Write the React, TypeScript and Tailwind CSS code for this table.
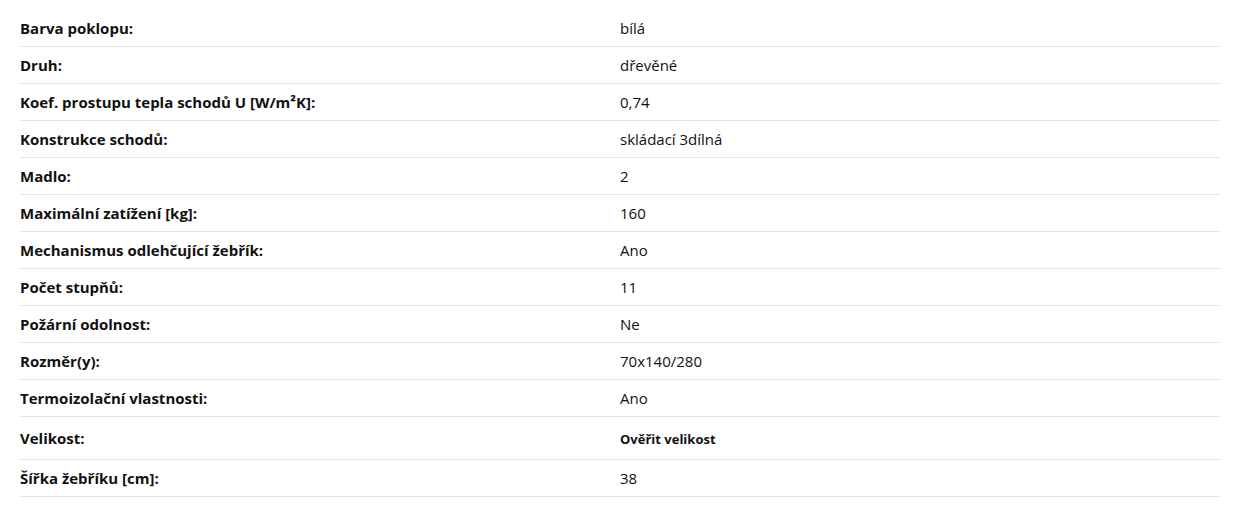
const rows: [string, string][] = [
  ['Barva poklopu:', 'bílá'],
  ['Druh:', 'dřevěné'],
  ['Koef. prostupu tepla schodů U [W/m²K]:', '0,74'],
  ['Konstrukce schodů:', 'skládací 3dílná'],
  ['Madlo:', '2'],
  ['Maximální zatížení [kg]:', '160'],
  ['Mechanismus odlehčující žebřík:', 'Ano'],
  ['Počet stupňů:', '11'],
  ['Požární odolnost:', 'Ne'],
  ['Rozměr(y):', '70x140/280'],
  ['Termoizolační vlastnosti:', 'Ano'],
  ['Velikost:', ''],
  ['Šířka žebříku [cm]:', '38'],
]

export default function App() {
  return (
    <div className="bg-white px-5 pt-[10px] text-[#111] font-['Open_Sans',sans-serif] text-[15px]">
      {rows.map(([label, value]) => (
        <div
          key={label}
          className={`flex items-center border-b border-[#e3e3e3] ${
            label === 'Velikost:' ? 'h-[43px]' : 'h-[37px]'
          }`}
        >
          <div className="w-[600px] font-bold">{label}</div>
          <div className="flex-1">
            {label === 'Velikost:' ? (
              <span className="text-[13px] font-bold">Ověřit velikost</span>
            ) : (
              value
            )}
          </div>
        </div>
      ))}
    </div>
  )
}
